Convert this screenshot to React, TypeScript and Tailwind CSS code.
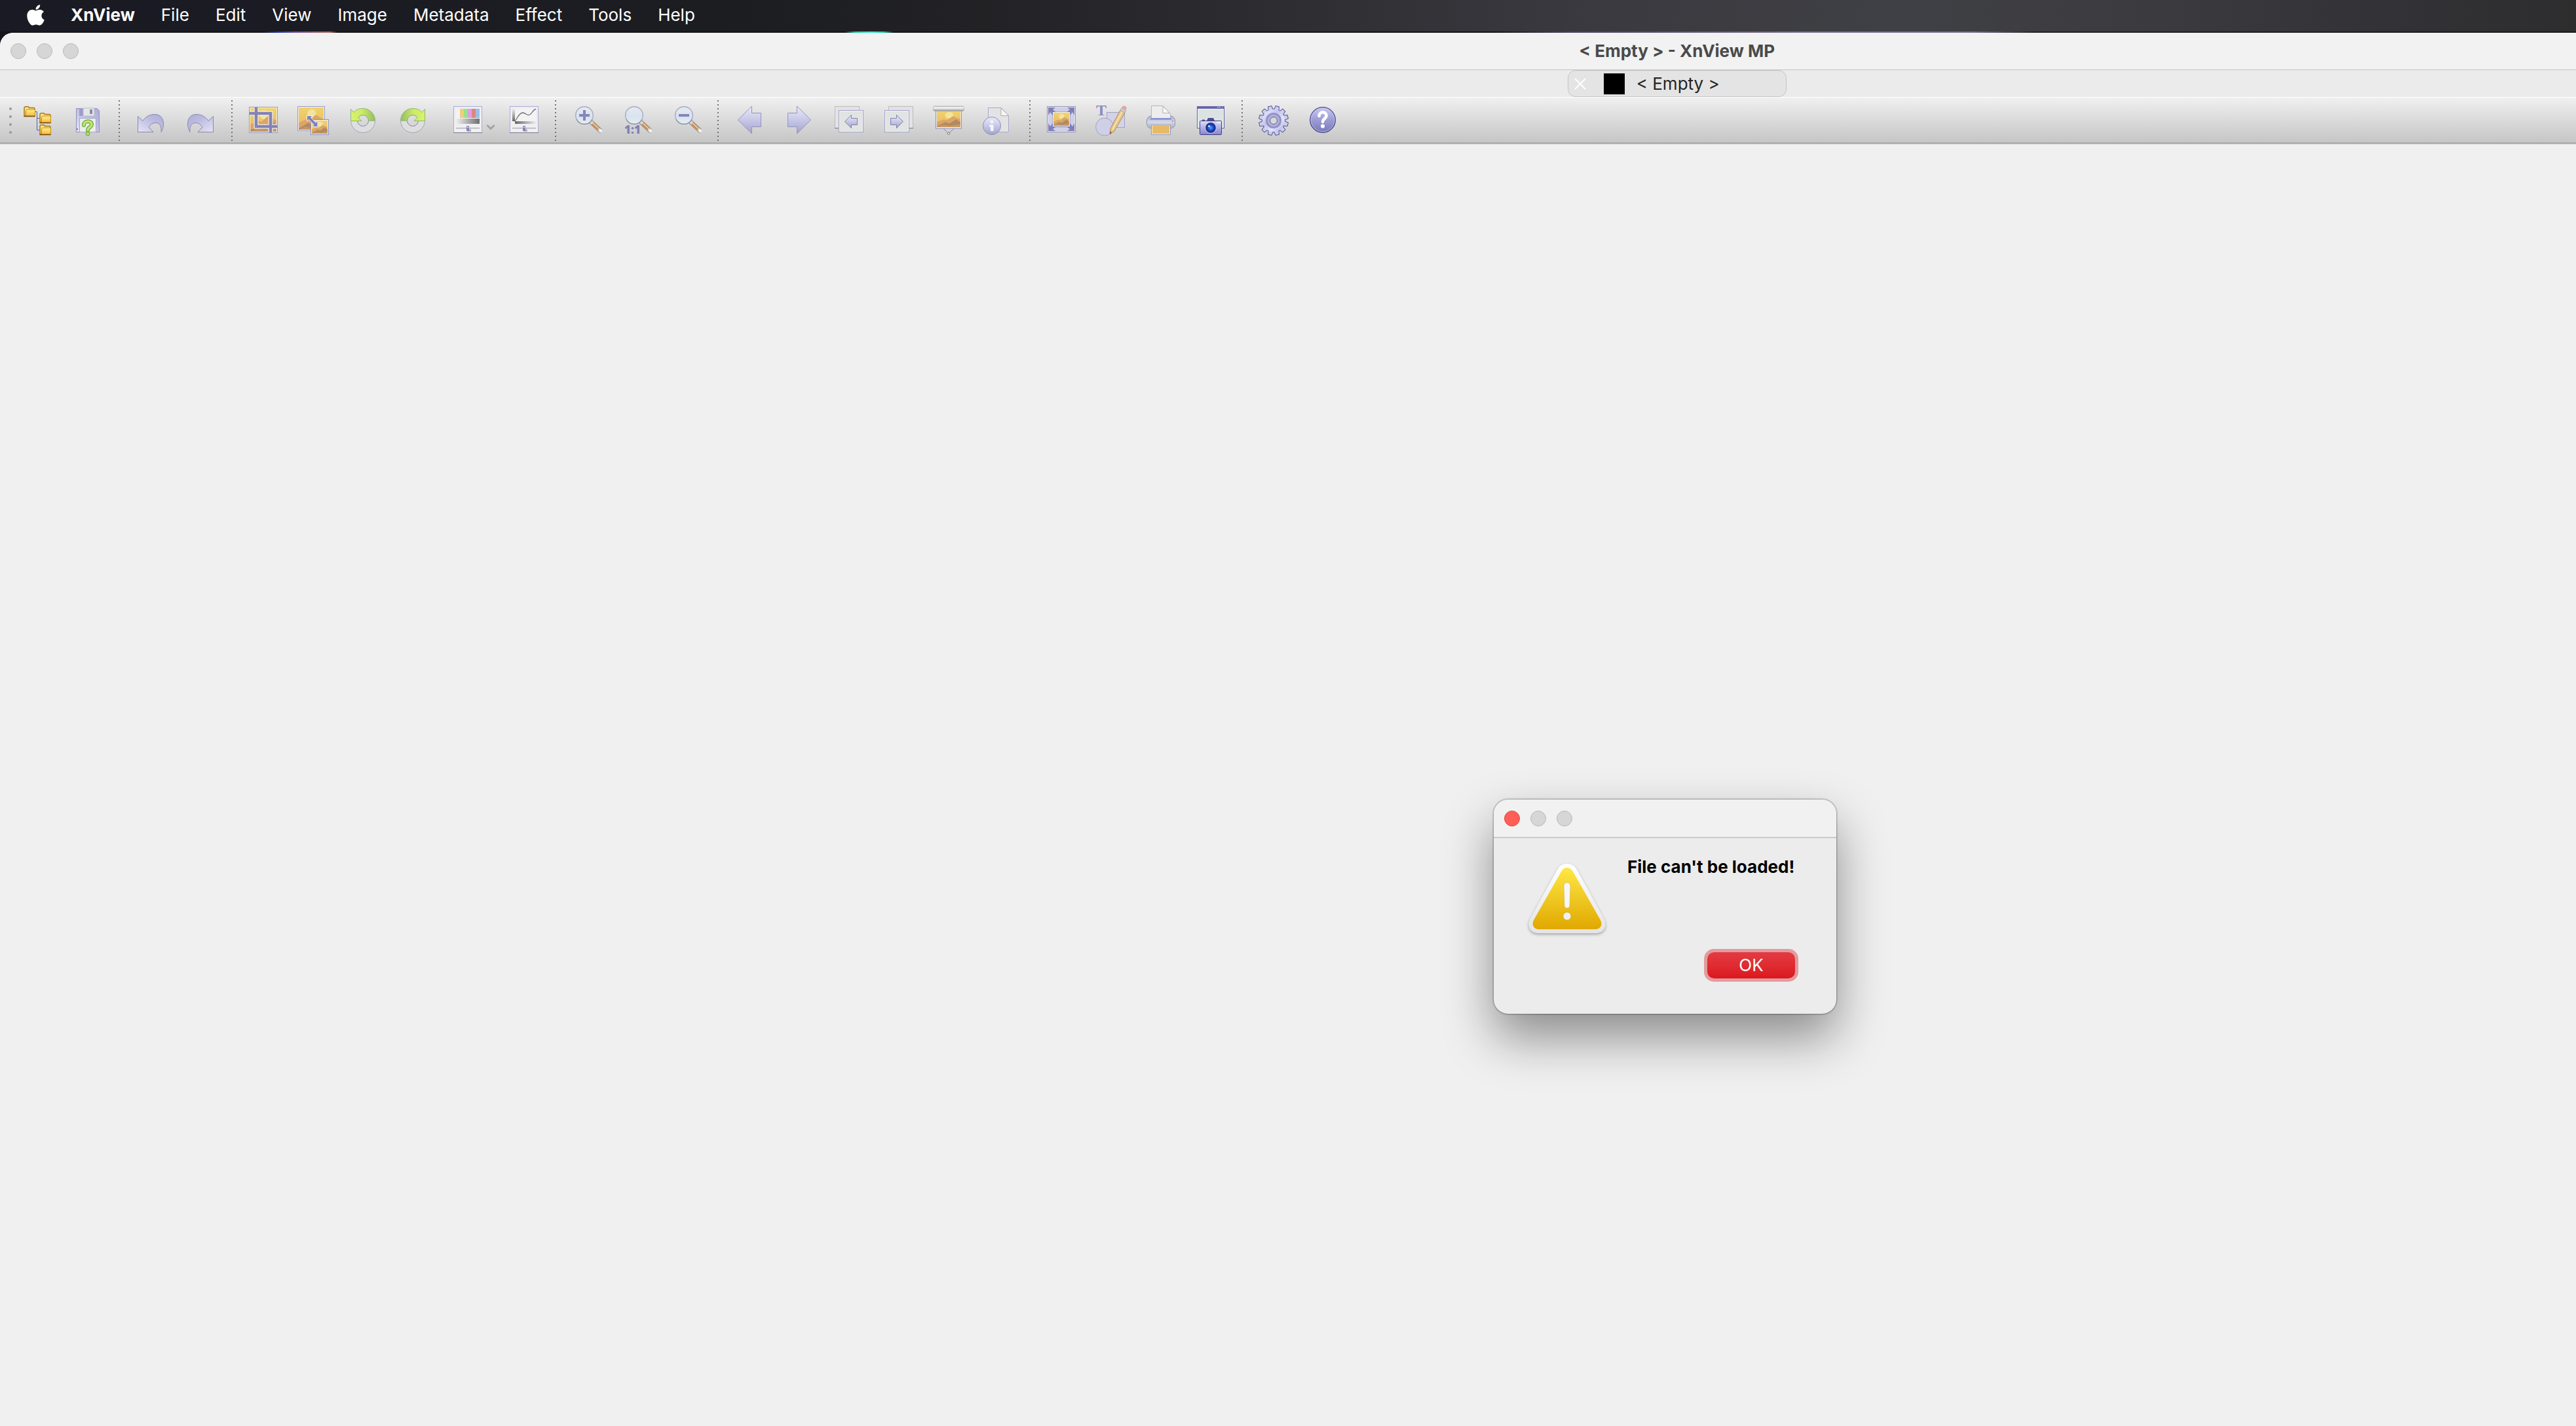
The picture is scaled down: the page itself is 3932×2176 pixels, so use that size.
import React from 'react';
import { FaApple } from 'react-icons/fa';

const menus = ['File', 'Edit', 'View', 'Image', 'Metadata', 'Effect', 'Tools', 'Help'];

// Gradients shared by all toolbar icons
const IconDefs: React.FC = () => (
  <svg className="absolute h-0 w-0" aria-hidden="true">
    <defs>
      <linearGradient id="lilac" x1="0" y1="0" x2="0" y2="1">
        <stop offset="0" stopColor="#e9ebf8" />
        <stop offset="0.4" stopColor="#cfcfec" />
        <stop offset="1" stopColor="#a3a3cc" />
      </linearGradient>
      <linearGradient id="curl" x1="1" y1="0" x2="0" y2="1">
        <stop offset="0" stopColor="#adadda" />
        <stop offset="0.4" stopColor="#bcbce2" />
        <stop offset="1" stopColor="#e4e4f3" />
      </linearGradient>
      <linearGradient id="green" x1="0" y1="0" x2="1" y2="0">
        <stop offset="0" stopColor="#d9f26b" />
        <stop offset="0.45" stopColor="#cdec66" />
        <stop offset="1" stopColor="#93bd62" />
      </linearGradient>
      <linearGradient id="sky" x1="0" y1="0" x2="0" y2="1">
        <stop offset="0" stopColor="#f0d46c" />
        <stop offset="1" stopColor="#e9b55f" />
      </linearGradient>
      <linearGradient id="folder" x1="0" y1="0" x2="0" y2="1">
        <stop offset="0" stopColor="#fff08a" />
        <stop offset="1" stopColor="#f5b93c" />
      </linearGradient>
      <linearGradient id="fadeRight" x1="0" y1="0" x2="1" y2="0">
        <stop offset="0" stopColor="#f0f0f0" />
        <stop offset="1" stopColor="#6e6e6e" />
      </linearGradient>
      <linearGradient id="fadeLeft" x1="0" y1="0" x2="1" y2="0">
        <stop offset="0" stopColor="#666" />
        <stop offset="1" stopColor="#ececec" />
      </linearGradient>
      <linearGradient id="fadeDown" x1="0" y1="0" x2="0" y2="1">
        <stop offset="0" stopColor="#ececec" />
        <stop offset="1" stopColor="#666" />
      </linearGradient>
      <linearGradient id="glass" x1="0" y1="0" x2="0" y2="1">
        <stop offset="0" stopColor="#e6eaef" />
        <stop offset="0.6" stopColor="#d8e3ee" />
        <stop offset="1" stopColor="#e8eef2" />
      </linearGradient>
      <linearGradient id="roller" x1="0" y1="0" x2="0" y2="1">
        <stop offset="0" stopColor="#c4c4c4" />
        <stop offset="0.35" stopColor="#f8f8f8" />
        <stop offset="1" stopColor="#949494" />
      </linearGradient>
      <linearGradient id="printer" x1="0" y1="0" x2="0" y2="1">
        <stop offset="0" stopColor="#a9b3c9" />
        <stop offset="0.5" stopColor="#d5d9e8" />
        <stop offset="1" stopColor="#a9aec4" />
      </linearGradient>
      <linearGradient id="gear" x1="0" y1="0" x2="1" y2="1">
        <stop offset="0" stopColor="#f0f0ff" />
        <stop offset="0.4" stopColor="#c3c3ee" />
        <stop offset="0.65" stopColor="#e4e4fb" />
        <stop offset="1" stopColor="#a6a6dc" />
      </linearGradient>
      <linearGradient id="camera" x1="0" y1="0" x2="0" y2="1">
        <stop offset="0" stopColor="#dcdcff" />
        <stop offset="1" stopColor="#8585cc" />
      </linearGradient>
      <linearGradient id="help" x1="0" y1="0" x2="0" y2="1">
        <stop offset="0" stopColor="#c9c9f2" />
        <stop offset="0.5" stopColor="#9c9cd6" />
        <stop offset="1" stopColor="#7878b6" />
      </linearGradient>
      <radialGradient id="lens">
        <stop offset="0" stopColor="#54a8ff" />
        <stop offset="0.5" stopColor="#1d4fd0" />
        <stop offset="1" stopColor="#14206e" />
      </radialGradient>
      <linearGradient id="warnRim" x1="0" y1="0" x2="0" y2="1">
        <stop offset="0" stopColor="#ffffff" />
        <stop offset="1" stopColor="#e4e4e4" />
      </linearGradient>
      <linearGradient id="warnFill" x1="0" y1="0" x2="0" y2="1">
        <stop offset="0" stopColor="#ffe845" />
        <stop offset="1" stopColor="#e0a800" />
      </linearGradient>
    </defs>
  </svg>
);

// Small desert picture, drawn on a 40x36 canvas
const Landscape: React.FC<{ x: number; y: number; w: number; h: number }> = ({ x, y, w, h }) => (
  <svg x={x} y={y} width={w} height={h} viewBox="0 0 40 36" preserveAspectRatio="none">
    <rect width="40" height="36" fill="url(#sky)" />
    <circle cx="21" cy="10" r="7" fill="#f3e3a0" />
    <path d="M0 25 L12 19 L17 21 L27 12 L40 19 V36 H0Z" fill="#dba566" />
    <path d="M0 34 L15 25 L21 28 L33 19 L40 26 V36 H0Z" fill="#b08a62" />
    <path d="M0 36 L10 31 L22 33 L40 29 V36Z" fill="#c99862" />
  </svg>
);

const FolderShape: React.FC<{ x: number; y: number }> = ({ x, y }) => (
  <g transform={`translate(${x} ${y})`}>
    <path d="M1 15 V2 L2.5 0.7 H7 L8.5 2.5 H16 L17 4 V15Z" fill="url(#folder)" stroke="#a8731c" strokeWidth="1.4" />
    <path d="M3.5 14.5 V6.5 L5 5 H17.5 V15 H3.5Z" fill="url(#folder)" stroke="#c68a20" />
    <path d="M0.5 15.5 H17.5" stroke="#7d4a10" strokeWidth="1.4" />
  </g>
);

const FoldersIcon = () => (
  <>
    <path d="M20 10.5 H22.5 V38.5 H26 M22.5 20.5 H26" fill="none" stroke="#5560a0" />
    <FolderShape x={2} y={2} />
    <FolderShape x={26} y={12} />
    <FolderShape x={26} y={30} />
  </>
);

const SaveIcon = () => (
  <>
    <path d="M6.5 5.5 H38 L41.5 9 V41.5 H6.5Z" fill="url(#curl)" stroke="#9090bf" />
    <rect x="11" y="5" width="6" height="12" fill="#9c9cce" />
    <rect x="17" y="5" width="17" height="12" fill="#e6e6e6" stroke="#b9b9cf" />
    <rect x="27" y="7" width="4" height="7" fill="#8c8ca3" />
    <rect x="11.5" y="20.5" width="25" height="21" fill="#ededed" stroke="#a5a5cc" />
    <rect x="7" y="36" width="2" height="2" fill="#7777a8" />
    <path d="M18 31 C17 24 30 23 30 30 C30 34 24 34 24 38.5" fill="none" stroke="#6ba550" strokeWidth="6" strokeLinecap="round" />
    <path d="M18 31 C17 24 30 23 30 30 C30 34 24 34 24 38.5" fill="none" stroke="#c0e862" strokeWidth="3.6" strokeLinecap="round" />
    <circle cx="24" cy="44" r="3" fill="#a8dc68" stroke="#6ba550" />
  </>
);

const UndoIcon = () => (
  <path
    d="M4.5 17.5 L12 24.5 C17 17 24 14.5 30.5 14.5 C39 14.5 43.5 21 43.5 29 C43.5 34 42 38 40 41.5 C41 33 37.5 27.5 32 27.5 C27 27.5 23.5 30 21 34 L28 41.5 H4.5Z"
    fill="url(#curl)"
    stroke="#8989aa"
  />
);

const CropIcon = () => (
  <>
    <rect x="2.5" y="3.5" width="43" height="39" fill="#f4f4f4" stroke="#9494bd" />
    <Landscape x={4} y={5} w={40} h={36} />
    <path d="M13 4 V33 H44.5 M3.5 13 H35 V42" fill="none" stroke="#f2f0f0" strokeWidth="7" />
    <path d="M13 4 V33 H45 M3 13 H35 V42" fill="none" stroke="#8583b3" strokeWidth="4.6" />
  </>
);

const ResizeIcon = () => (
  <>
    <rect x="0.5" y="2.5" width="41" height="37" fill="#f4f4f4" stroke="#9a9ac4" />
    <Landscape x={2} y={4} w={38} h={34} />
    <rect x="20.5" y="22.5" width="27" height="23" fill="#f4f4f4" stroke="#8f8fb5" />
    <Landscape x={22} y={24} w={24} h={20} />
    <path
      d="M14.5 16.5 H23 L20.5 19 L28 27 L31 24.5 V33.5 H22.5 L25 30.5 L17.5 22.5 L14.5 25Z"
      fill="#7f80bd"
      stroke="#f2f2f2"
      strokeWidth="1"
    />
  </>
);

const RotateIcon = () => (
  <>
    <path d="M5.5 24 A18.5 18.5 0 0 0 42.5 24 H32.5 A8.5 8.5 0 0 1 15.5 24Z" fill="#e2e2e2" fillOpacity="0.7" stroke="#a3a3be" />
    <circle cx="24" cy="24" r="8.5" fill="none" stroke="#9a9ab8" />
    <path
      d="M5.5 6.5 L10 11.5 C13 7.5 18 5.5 24 5.5 A18.5 18.5 0 0 1 42.5 24 H32.5 A8.5 8.5 0 0 0 24 15.5 C20.5 15.5 18 17 17 19.5 L22 24.5 H5.5Z"
      fill="url(#green)"
      stroke="#8fb877"
    />
  </>
);

const SliderPanel: React.FC<{ children: React.ReactNode }> = ({ children }) => (
  <>
    <rect x="2.5" y="2.5" width="43" height="40" fill="#efeff2" stroke="#acacda" />
    <path d="M2 42.5 H46" stroke="#77778f" />
    <rect x="6" y="6" width="36" height="23" fill="#f3f3f3" />
    {children}
    <path d="M6 35.5 H42" stroke="#9a9aa0" />
    <rect x="24" y="37" width="5" height="4" fill="#b5b5bd" />
    <rect x="22" y="32" width="4" height="8" fill="#8484bb" />
    <rect x="23" y="33" width="2" height="2" fill="#d2d2f0" />
  </>
);

const AdjustIcon = () => (
  <SliderPanel>
    <rect x="12" y="6" width="6" height="14" fill="#f0cd80" />
    <rect x="18" y="6" width="6" height="14" fill="#9ee08c" />
    <rect x="24" y="6" width="6" height="14" fill="#dba0e6" />
    <rect x="30" y="6" width="6" height="14" fill="#de8583" />
    <rect x="36" y="6" width="6" height="14" fill="#96c1e2" />
    <rect x="6" y="21" width="36" height="8" fill="url(#fadeRight)" />
  </SliderPanel>
);

const CurvesIcon = () => (
  <SliderPanel>
    <rect x="6" y="6" width="4" height="19" fill="url(#fadeDown)" />
    <rect x="10" y="25" width="32" height="4" fill="url(#fadeLeft)" />
    <path d="M10 24.5 C14 21 16 12 22 12 C26 12 27 16 31 15.5 C36 15 37 7 42 6.5" fill="none" stroke="#6c6c74" strokeWidth="1.3" />
  </SliderPanel>
);

const Magnifier: React.FC<{ children?: React.ReactNode }> = ({ children }) => (
  <g transform="translate(2 0)">
    <path d="M28 26 L42 39" stroke="#8f8a88" strokeWidth="7" strokeLinecap="round" />
    <path d="M28 26 L42 39" stroke="#d8d8dc" strokeWidth="5" strokeLinecap="round" />
    <path d="M30.5 28.5 L40 37" stroke="#c98e58" strokeWidth="5.5" />
    <path d="M31 28 L41 37" stroke="#f1d6ae" strokeWidth="1.5" />
    <circle cx="43" cy="39.5" r="2.6" fill="#f1f1f3" />
    <circle cx="18" cy="16" r="13.3" fill="url(#glass)" stroke="#a9a9c6" strokeWidth="1.4" />
    <path d="M6 22 A13.3 13.3 0 0 0 30 22" fill="none" stroke="#8e9aa3" strokeWidth="1.4" />
    {children}
  </g>
);

const ZoomInIcon = () => (
  <Magnifier>
    <path d="M10 16 H26 M18 8 V24" stroke="#8585bd" strokeWidth="4" />
  </Magnifier>
);

const ZoomActualIcon = () => (
  <Magnifier>
    <text x="3" y="44" fontSize="17" fontWeight="800" fill="#8080b5" fontFamily="Open Sans">
      1:1
    </text>
  </Magnifier>
);

const ZoomOutIcon = () => (
  <Magnifier>
    <path d="M10 16 H26" stroke="#8585bd" strokeWidth="4" />
  </Magnifier>
);

const ArrowIcon = () => (
  <path d="M6.5 23 L27.5 2 V12.5 H41.5 V33.5 H27.5 V44 Z" fill="url(#lilac)" stroke="#9494bf" />
);

const FileStepIcon = () => (
  <>
    <rect x="2.5" y="2.5" width="37" height="33" fill="#e3e3e3" stroke="#bcbcbc" />
    <path d="M2 35.5 H8" stroke="#777" />
    <rect x="8.5" y="8.5" width="37" height="33" fill="#e2e4e4" stroke="#a3a3cf" />
    <rect x="9.5" y="9.5" width="35" height="31" fill="none" stroke="#f2f2f2" />
    <path d="M17.5 25.5 L27.5 15.5 V20.5 H36.5 V30.5 H27.5 V35.5Z" fill="url(#lilac)" stroke="#7f7fa5" />
  </>
);

const SlideshowIcon = () => (
  <>
    <path d="M15 35 L24 44 L33 35" fill="none" stroke="#8a8a8a" />
    <circle cx="24" cy="43.5" r="1.7" fill="#eee" stroke="#777" />
    <rect x="4.5" y="9" width="39" height="27" fill="#f0f0f0" stroke="#8f8fb8" />
    <Landscape x={6} y={9} w={36} h={25} />
    <rect x="0.5" y="2" width="47" height="7.5" rx="2.5" fill="url(#roller)" stroke="#a5a5a5" strokeWidth="0.6" />
  </>
);

const FileInfoIcon = () => (
  <>
    <path d="M8.5 4.5 H28 L39.5 16.5 V41.5 H8.5Z" fill="#e3e3e5" stroke="#a8a8cc" />
    <path d="M28 5 V16.5 H39.5Z" fill="#f8f8f8" stroke="#ababab" />
    <circle cx="14" cy="32" r="13.5" fill="url(#lilac)" stroke="#8c8cba" />
    <circle cx="14" cy="26" r="2.4" fill="#f6f6fa" />
    <path d="M10 30.5 H16.5 V40 H12 V33.5 H10Z" fill="#f6f6fa" />
  </>
);

const FullscreenIcon = () => (
  <>
    <rect x="2.5" y="2.5" width="43" height="39" fill="#8080b8" stroke="#9494b5" />
    <rect x="3.5" y="3.5" width="41" height="37" fill="none" stroke="#e6e6ee" />
    <g fill="#cfcfea">
      <path d="M11 7 L15 4 H33 L37 7 L33 10.5 H15Z" />
      <path d="M11 37 L15 34 H33 L37 37 L33 40 H15Z" />
      <path d="M7 11 L10.5 16 V28 L7 33 L4 28 V16Z" />
      <path d="M41 11 L44 16 V28 L41 33 L37.5 28 V16Z" />
    </g>
    <rect x="11" y="11" width="26" height="22" fill="#f4f0ea" />
    <Landscape x={12} y={12} w={24} h={20} />
  </>
);

const DrawIcon = () => (
  <>
    <text x="1" y="16" fontSize="24" fontWeight="700" fill="#8c8cc0" fontFamily="Liberation Serif">
      T
    </text>
    <rect x="17.5" y="11.5" width="27" height="23" fill="#d3d3e6" stroke="#a0a0cc" />
    <circle cx="14" cy="33.5" r="13.5" fill="#cfcfe6" stroke="#a0a0cc" />
    <path d="M22 45 L23 36 L38 8 L45 12 L29 40Z" fill="#e3c487" stroke="#b28d58" />
    <path d="M26 38 L41 10" stroke="#f5e3b6" strokeWidth="2" />
    <path d="M22 45 L22.5 40.5 L25 42Z" fill="#8d4c46" />
    <path d="M38 8 L40 4.5 L46.5 8.5 L45 12Z" fill="#c9cdd2" stroke="#a3a7ac" strokeWidth="0.8" />
    <path d="M40 4.5 C41 0 48 1 47.5 5.5 L46.5 8.5Z" fill="#e6a3a3" />
  </>
);

const PrintIcon = () => (
  <>
    <rect x="2.5" y="17" width="43" height="19" rx="7" fill="url(#printer)" stroke="#8f97ac" />
    <path d="M9.5 20.5 V1.5 H27 L38.5 14 V20.5Z" fill="#ededed" stroke="#b4b4cc" />
    <path d="M27 2 V12.5 H37Z" fill="#fafafa" stroke="#b0b0b0" />
    <path d="M8 21.5 H40" stroke="#7d83de" strokeWidth="2" />
    <path d="M4 29 Q24 33 44 29" fill="none" stroke="#c3c8da" strokeWidth="2" />
    <rect x="41" y="24" width="2" height="2" fill="#e08080" />
    <rect x="9.5" y="31" width="29" height="14.5" fill="#f2efe8" stroke="#9797b0" />
    <rect x="11" y="32" width="26" height="12" fill="#e8ba66" />
  </>
);

const CaptureIcon = () => (
  <>
    <rect x="3.5" y="2.5" width="41" height="33" fill="#f6f6ff" stroke="#5f5fa3" />
    <rect x="3" y="2" width="42" height="4" fill="#6767ab" />
    <path d="M34 3.5 H36 M37 3.5 H39" stroke="#d6d6f5" />
    <rect x="41" y="3" width="2" height="1.5" fill="#ee6a80" />
    <rect x="5" y="7" width="38" height="27" fill="#dbe2e2" />
    <path d="M18 24 L20 20 H28 L30 24Z" fill="#4d4d92" />
    <rect x="11" y="22.5" width="4" height="2" fill="#4d4d92" />
    <rect x="7.5" y="24.5" width="33" height="21" rx="1" fill="url(#camera)" stroke="#3e3e80" />
    <rect x="33" y="25.5" width="6" height="2" fill="#f5f5ff" />
    <circle cx="24" cy="35" r="9" fill="#b8b8ea" />
    <circle cx="24" cy="35" r="7.7" fill="url(#lens)" />
    <circle cx="21.5" cy="32.5" r="1.6" fill="#bfe8ff" />
  </>
);

const toothAngles = [15, 45, 75, 105, 135, 165, 195, 225, 255, 285, 315, 345];

const SettingsIcon = () => (
  <>
    <circle cx="24" cy="24" r="18.2" fill="#60609e" />
    {toothAngles.map((angle) => (
      <path
        key={angle}
        d="M20 9 L21.3 1.5 H26.7 L28 9Z"
        transform={`rotate(${angle} 24 24)`}
        fill="#cdcdf3"
        stroke="#55558f"
      />
    ))}
    <circle cx="24" cy="24" r="17.2" fill="url(#gear)" />
    <circle cx="24" cy="24" r="12" fill="#9393c6" />
    <circle cx="24" cy="24" r="9" fill="#b3b3df" />
    <circle cx="24" cy="24" r="5.5" fill="#d8d8d8" stroke="#5a5a94" />
  </>
);

const HelpIcon = () => (
  <>
    <circle cx="23" cy="23" r="19.3" fill="url(#help)" stroke="#4c4c90" strokeWidth="1.3" />
    <circle cx="23" cy="23" r="17.8" fill="none" stroke="#c3c3ee" strokeWidth="0.8" />
    <path d="M17.5 17 C17.5 9 29 9.5 28.5 17 C28.3 21 23 21 23 26" fill="none" stroke="#fff" strokeWidth="4.5" strokeLinecap="round" />
    <circle cx="23" cy="32.5" r="3" fill="#fff" />
  </>
);

interface Tool {
  label: string;
  icon: React.FC;
  flip?: boolean;
  menu?: boolean;
}

const toolGroups: Tool[][] = [
  [
    { label: 'Browser', icon: FoldersIcon },
    { label: 'Save as', icon: SaveIcon },
  ],
  [
    { label: 'Undo', icon: UndoIcon },
    { label: 'Redo', icon: UndoIcon, flip: true },
  ],
  [
    { label: 'Crop', icon: CropIcon },
    { label: 'Resize', icon: ResizeIcon },
    { label: 'Rotate left', icon: RotateIcon },
    { label: 'Rotate right', icon: RotateIcon, flip: true },
    { label: 'Adjust', icon: AdjustIcon, menu: true },
    { label: 'Curves', icon: CurvesIcon },
  ],
  [
    { label: 'Zoom in', icon: ZoomInIcon },
    { label: 'Zoom 100%', icon: ZoomActualIcon },
    { label: 'Zoom out', icon: ZoomOutIcon },
  ],
  [
    { label: 'Previous', icon: ArrowIcon },
    { label: 'Next', icon: ArrowIcon, flip: true },
    { label: 'Previous file', icon: FileStepIcon },
    { label: 'Next file', icon: FileStepIcon, flip: true },
    { label: 'Slideshow', icon: SlideshowIcon },
    { label: 'File info', icon: FileInfoIcon },
  ],
  [
    { label: 'Fullscreen', icon: FullscreenIcon },
    { label: 'Draw', icon: DrawIcon },
    { label: 'Print', icon: PrintIcon },
    { label: 'Capture', icon: CaptureIcon },
  ],
  [
    { label: 'Settings', icon: SettingsIcon },
    { label: 'Help', icon: HelpIcon },
  ],
];

const ToolButton: React.FC<{ tool: Tool }> = ({ tool }) => {
  const Icon = tool.icon;
  return (
    <button aria-label={tool.label} className={`flex items-center ${tool.menu ? 'w-[94px] gap-1 pl-[22px]' : 'w-[76px] justify-center'}`}>
      <svg viewBox="0 0 48 48" className={`h-12 w-12 shrink-0 overflow-visible ${tool.flip ? '-scale-x-100' : ''}`}>
        <Icon />
      </svg>
      {tool.menu && (
        <svg viewBox="0 0 14 48" className="h-12 w-[14px] shrink-0">
          <path d="M1.500 31 L7 36.500 L12.500 31" fill="none" stroke="#a3a3a3" strokeWidth="3" />
        </svg>
      )}
    </button>
  );
};

const Toolbar: React.FC = () => (
  <div role="toolbar" className="flex h-[72px] border-t border-b-[3px] border-t-white border-b-[#b0b0b0] bg-linear-to-b from-[#f0f0f0] to-[#c6c6c6] pt-[2px]">
    <div className="flex w-5 shrink-0 flex-col items-center justify-center gap-2 pl-3">
      {[0, 1, 2, 3].map((i) => (
        <span key={i} className="h-1 w-1 rounded-full bg-[#999]" />
      ))}
    </div>
    {toolGroups.map((group, i) => (
      <React.Fragment key={i}>
        {i > 0 && (
          <div className="flex w-5 shrink-0 items-center justify-center">
            <span className="h-[62px] w-[2px] bg-[repeating-linear-gradient(to_bottom,#737373_0px_2px,transparent_2px_6px)]" />
          </div>
        )}
        {group.map((tool) => (
          <ToolButton key={tool.label} tool={tool} />
        ))}
      </React.Fragment>
    ))}
  </div>
);

const WindowLights: React.FC<{ active?: boolean }> = ({ active }) => (
  <div className="flex gap-4 px-4">
    <button aria-label="Close" className={`h-6 w-6 rounded-full border ${active ? 'border-[#e2463f] bg-[#ff5f57]' : 'border-[#b9b9b9] bg-[#d6d6d6]'}`} />
    <button aria-label="Minimize" className="h-6 w-6 rounded-full border border-[#b9b9b9] bg-[#d6d6d6]" />
    <button aria-label="Zoom" className="h-6 w-6 rounded-full border border-[#b9b9b9] bg-[#d6d6d6]" />
  </div>
);

const MenuBar: React.FC = () => (
  <>
    <nav className="flex h-12 items-center gap-10 bg-[linear-gradient(to_right,#1a1a24_0%,#1c1d21_28%,#222225_38%,#2c2b30_48%,#3a393f_61%,#3f4045_74%,#3b3a3f_84%,#343338_91%,#2d2d2e_100%)] px-[41px] pb-[2px] text-[26px] leading-8 text-white">
      <button aria-label="Apple">
        <FaApple className="h-9 w-[27px]" />
      </button>
      <button className="font-bold">XnView</button>
      {menus.map((menu) => (
        <button key={menu}>{menu}</button>
      ))}
    </nav>
    {/* sliver of the desktop between the menu bar and the window */}
    <div className="h-[2px] bg-[linear-gradient(to_right,#141418_10.2%,#23379a_10.8%,#6a5296_11.4%,#a86a5c_12.8%,#141418_13.1%,#141418_32.8%,#1fc79a_33.2%,#3fe0d0_33.8%,#1fc79a_34.3%,#141418_34.7%,#151515_58%,#4a4460_61%,#77708c_70%,#77708c_76.500%,#232323_79%,#1c1c1c_100%)]" />
  </>
);

const WarningIcon: React.FC = () => (
  <svg viewBox="0 0 128 128" className="h-32 w-32 shrink-0 drop-shadow-[0_2px_2px_rgba(0,0,0,0.3)]">
    <path d="M49 20 C55 8 73 8 79 20 L120 94 C127 107 119 117 108 117 H20 C9 117 1 107 8 94Z" fill="url(#warnRim)" />
    <path d="M55 23 C59 15 69 15 73 23 L115 97 C119 105 114 111 107 111 H21 C14 111 9 105 13 97Z" fill="url(#warnFill)" />
    <path d="M59 45 C59 38 69 38 69 45 L68 75 C68 80 60 80 60 75Z" fill="#f7f7f7" stroke="#d8a520" strokeWidth="0.5" />
    <circle cx="64" cy="91" r="6" fill="#f0f0f0" stroke="#c9960c" strokeWidth="0.5" />
  </svg>
);

const ErrorDialog: React.FC<{ onClose: () => void }> = ({ onClose }) => (
  <div
    role="alertdialog"
    aria-labelledby="error-message"
    className="absolute top-[1220px] left-[2280px] w-[523px] overflow-hidden rounded-[22px] bg-[#ececec] shadow-[0_0_2px_1px_rgba(0,0,0,0.35),0_36px_76px_rgba(0,0,0,0.42)]"
  >
    <div className="flex h-[59px] items-center border-b-2 border-[#cbcbcb] bg-[#f1f1f1]">
      <WindowLights active />
    </div>
    <div className="flex gap-7 pt-7 pr-[63px] pb-[54px] pl-12">
      <WarningIcon />
      <div className="flex flex-1 flex-col items-end justify-between">
        <p id="error-message" className="self-start text-[26px] leading-8 font-bold whitespace-nowrap text-black">
          File can't be loaded!
        </p>
        <button
          onClick={onClose}
          className="mt-[114px] h-10 w-[134px] rounded-[10px] bg-linear-to-b from-[#e23b42] to-[#db161e] text-[26px] leading-8 text-white ring-5 ring-[#e39b9e]"
        >
          OK
        </button>
      </div>
    </div>
  </div>
);

const App: React.FC = () => {
  const [dialogOpen, setDialogOpen] = React.useState(true);

  return (
    <div className="relative flex min-h-screen flex-col overflow-hidden bg-[#15151a] font-['Inter',sans-serif]">
      <IconDefs />
      <MenuBar />
      <main className="flex flex-1 flex-col overflow-hidden rounded-tl-[20px] bg-[#f0f0f0]">
        <header className="grid h-[57px] grid-cols-[30.2%_1fr] items-center border-b border-[#c3c3c3] bg-[#f2f2f2]">
          <WindowLights />
          <h1 className="text-center text-[26px] leading-8 font-bold text-[#4a4a4a]">&lt; Empty &gt; - XnView MP</h1>
        </header>
        <div role="tablist" className="flex h-[41px] justify-center bg-[#ebebeb] pl-[30.2%]">
          <div className="flex w-[334px] items-center rounded-xl border border-[#c4c4c4] bg-[#e4e4e4] pl-[9px]">
            <button aria-label="Close tab">
              <svg viewBox="0 0 18 18" className="h-[18px] w-[18px]">
                <path d="M1 1 L17 17 M17 1 L1 17" stroke="#fff" strokeWidth="2" />
              </svg>
            </button>
            <button role="tab" aria-selected="true" className="ml-[27px] flex items-center gap-[18px] text-[26px] leading-8 text-[#242424]">
              <span className="h-8 w-8 bg-black" />
              &lt; Empty &gt;
            </button>
          </div>
        </div>
        <Toolbar />
      </main>
      {dialogOpen && <ErrorDialog onClose={() => setDialogOpen(false)} />}
    </div>
  );
};

export default App;
